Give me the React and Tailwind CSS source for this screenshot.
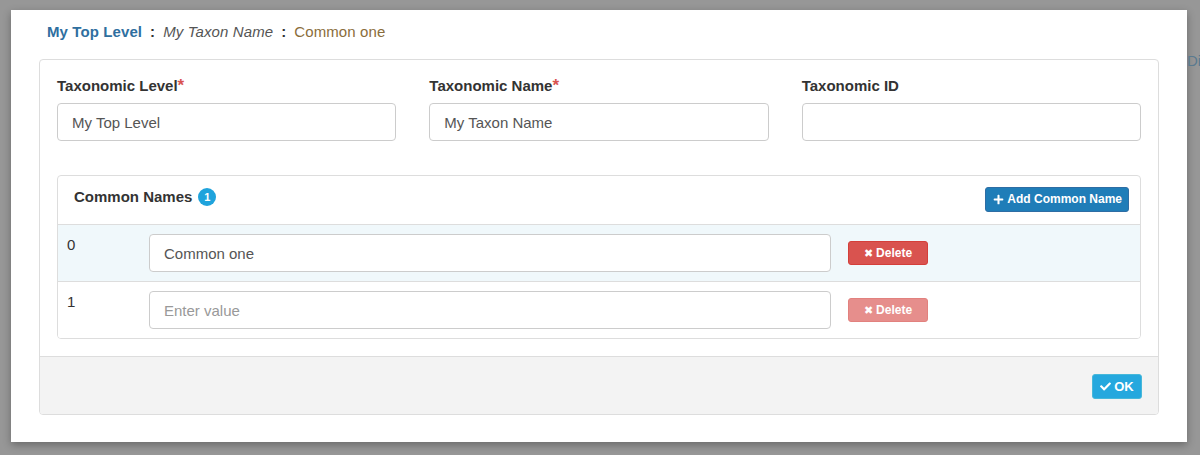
import { FaPlus, FaCheck } from "react-icons/fa";

const font = { fontFamily: '"Liberation Sans", Arial, sans-serif' };

function Field({ label, required, value }) {
  return (
    <div className="flex flex-col">
      <label className="text-[15px] font-bold text-[#333] leading-[20px] h-[20px] mb-[7px]">
        {label}
        {required && <span className="text-[#d9534f] text-[17px]">*</span>}
      </label>
      <input
        readOnly
        value={value}
        className="h-[38px] rounded-[4px] border border-[#ccc] px-[14px] text-[15px] text-[#555] bg-white outline-none"
      />
    </div>
  );
}

function NameRow({ index, value, active }) {
  return (
    <div
      className={`flex items-start h-[57px] border-t border-[#ddd] ${active ? "bg-[#f0f8fb]" : "bg-white"}`}
    >
      <div className="w-[91px] pl-[9px] pt-[9px] text-[15px] text-[#333]">{index}</div>
      <input
        readOnly
        value={value}
        placeholder="Enter value"
        className="mt-[9px] w-[682px] h-[38px] rounded-[4px] border border-[#ccc] px-[14px] text-[15px] text-[#555] placeholder:text-[#999] bg-white outline-none"
      />
      <button
        className={`ml-[17px] mt-[16px] w-[80px] h-[24px] flex items-center justify-center gap-[3px] rounded-[3px] border border-[#d43f3a] bg-[#d9534f] text-white text-[12px] font-bold ${active ? "" : "opacity-65"}`}
      >
        <span className="text-[11px] font-['DejaVu_Sans'] leading-none">✖</span>
        Delete
      </button>
    </div>
  );
}

export default function App() {
  return (
    <div style={font} className="w-[1200px] h-[455px] bg-[#979797] flex overflow-hidden">
      <div className="ml-[11px] mt-[10px] w-[1176px] h-[432px] bg-white shadow-[0_3px_8px_rgba(0,0,0,0.3)] px-[28px] pt-[12px]">
        <div className="pl-[8px] h-[18px] mt-[1px] mb-[18px] flex items-center gap-[8px] text-[15px] tracking-[0.1px]">
          <span className="font-bold text-[#2f6f9f]">My Top Level</span>
          <span className="font-bold text-[#333]">:</span>
          <span className="italic text-[#555]">My Taxon Name</span>
          <span className="font-bold text-[#333]">:</span>
          <span className="text-[#8a6d3b]">Common one</span>
        </div>

        <div className="w-[1120px] border border-[#ddd] rounded-[4px] overflow-hidden">
          <div className="px-[17px] pt-[16px] pb-[17px]">
            <div className="grid grid-cols-3 gap-[33px]">
              <Field label="Taxonomic Level" required value="My Top Level" />
              <Field label="Taxonomic Name" required value="My Taxon Name" />
              <Field label="Taxonomic ID" value="" />
            </div>

            <div className="mt-[34px] border border-[#ddd] rounded-[4px] overflow-hidden">
              <div className="h-[48px] flex items-center justify-between pl-[16px] pr-[11px]">
                <div className="flex items-center gap-[6px] text-[15px] font-bold text-[#333] mb-[6px]">
                  Common Names
                  <span className="w-[18px] h-[18px] rounded-full bg-[#1fa3dc] text-white text-[11px] flex items-center justify-center">
                    1
                  </span>
                </div>
                <button className="h-[25px] mb-[2px] pl-[7px] pr-[6px] flex items-center gap-[3px] rounded-[3px] border border-[#2e6da4] bg-[#1f7db8] text-white text-[12px] font-bold">
                  <FaPlus className="text-[11px]" />
                  Add Common Name
                </button>
              </div>
              <NameRow index="0" value="Common one" active />
              <NameRow index="1" value="" />
            </div>
          </div>

          <div className="h-[58px] bg-[#f3f3f3] border-t border-[#ddd] flex justify-end items-start pr-[16px] pt-[17px]">
            <button className="h-[25px] w-[50px] flex items-center justify-center gap-[3px] rounded-[3px] border border-[#46b8da] bg-[#25a8de] text-white text-[13px] font-bold">
              <FaCheck className="text-[11px]" />
              OK
            </button>
          </div>
        </div>
      </div>
      <div className="flex-1 pt-[50px] text-[15px] text-[#5a7a8f]">Di</div>
    </div>
  );
}
